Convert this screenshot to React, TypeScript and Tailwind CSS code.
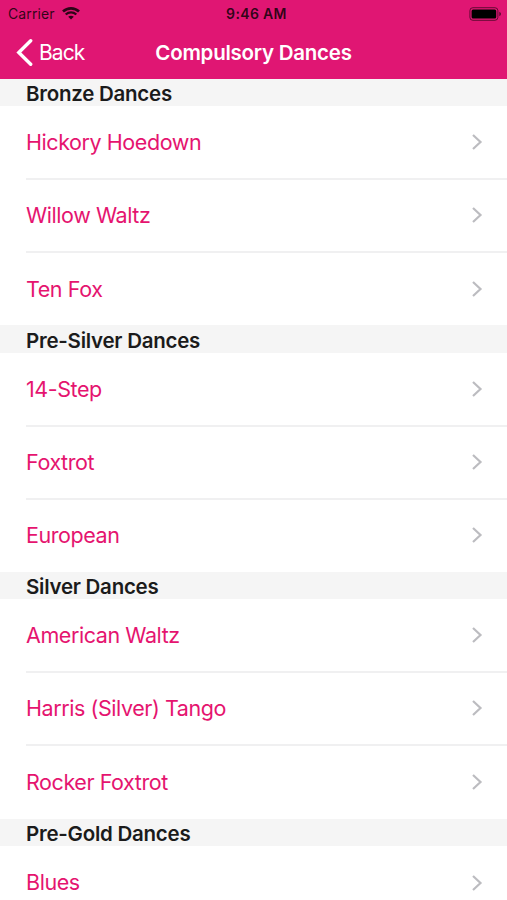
import React from 'react';

interface DanceSection {
  title: string;
  dances: string[];
}

const SECTIONS: DanceSection[] = [
  {
    title: 'Bronze Dances',
    dances: ['Hickory Hoedown', 'Willow Waltz', 'Ten Fox'],
  },
  {
    title: 'Pre-Silver Dances',
    dances: ['14-Step', 'Foxtrot', 'European'],
  },
  {
    title: 'Silver Dances',
    dances: ['American Waltz', 'Harris (Silver) Tango', 'Rocker Foxtrot'],
  },
  {
    title: 'Pre-Gold Dances',
    dances: ['Blues'],
  },
];

const WifiIcon = () => (
  <svg width="18" height="13" viewBox="0 0 18 13" fill="none" stroke="currentColor">
    <path d="M1 4.6C5.5.4 12.5.4 17 4.6" strokeWidth="2.7" />
    <path d="M3.7 7.5c3-2.8 7.6-2.8 10.6 0" strokeWidth="2.3" />
    <path d="M9 12.6 6.2 9.8c1.6-1.4 4-1.4 5.6 0Z" fill="currentColor" stroke="none" />
  </svg>
);

const BatteryIcon = () => (
  <svg width="33" height="14" viewBox="0 0 33 14" fill="none">
    <rect x="0.9" y="0.7" width="28" height="12.6" rx="3" stroke="#000" strokeOpacity="0.55" />
    <rect x="2.6" y="2.4" width="24.6" height="9.2" rx="1.5" fill="#000" />
    <path d="M30.3 4.8c2.2.8 2.2 3.6 0 4.4Z" fill="#000" fillOpacity="0.6" />
  </svg>
);

const StatusBar = () => (
  <div className="grid h-[26px] grid-cols-3 items-center pt-px pr-[5px] pl-2 text-[14px] text-black/80">
    <div className="flex items-center gap-[7px]">
      <span className="tracking-[0.1px]">Carrier</span>
      <WifiIcon />
    </div>
    <span className="pl-[3px] text-center font-semibold tracking-[0.35px]">9:46 AM</span>
    <div className="flex justify-end">
      <BatteryIcon />
    </div>
  </div>
);

const NavBar = () => (
  <div className="grid h-[52.6px] grid-cols-[1fr_auto_1fr] items-center px-4 text-white">
    <button className="flex items-center gap-[6px] text-left">
      <svg width="17" height="27" viewBox="0 0 17 27" fill="none" stroke="currentColor" strokeWidth="3.4">
        <path d="M14.7 1.8 2.8 13.5l11.9 11.7" strokeLinecap="round" />
      </svg>
      <span className="text-[21px] tracking-[-0.9px]">Back</span>
    </button>
    <h1 className="pt-[3px] text-[20.5px] font-semibold tracking-[-0.25px]">Compulsory Dances</h1>
  </div>
);

const DanceRow = ({ name, last }: { name: string; last: boolean }) => (
  <li className="ml-[26px] h-[73.06px]">
    <a
      className={
        last
          ? 'flex h-full items-center justify-between pr-6'
          : 'flex h-[74px] items-center justify-between border-b-2 border-[#f0f0f1] pr-6'
      }
    >
      <span className="text-[21.5px] tracking-[-0.43px] text-[#e5146f]">{name}</span>
      <svg width="12" height="18" viewBox="0 0 12 18" fill="none" stroke="#bcbcc0" strokeWidth="2.2">
        <path d="m2 2 7.5 7L2 16" />
      </svg>
    </a>
  </li>
);

export default function App() {
  return (
    <div className="h-[900px] w-[507px] overflow-hidden bg-white font-['Inter','Liberation_Sans',sans-serif]">
      <header className="bg-[#e01673]">
        <StatusBar />
        <NavBar />
      </header>

      <main>
        {SECTIONS.map((section) => (
          <section key={section.title}>
            <h2 className="flex h-[27.5px] items-center bg-[#f5f5f5] pt-1 pl-[26px] text-[20.5px] font-semibold tracking-[-0.25px] text-[#1b1b1b]">
              {section.title}
            </h2>
            <ul>
              {section.dances.map((dance, i) => (
                <DanceRow key={dance} name={dance} last={i === section.dances.length - 1} />
              ))}
            </ul>
          </section>
        ))}
      </main>
    </div>
  );
}
